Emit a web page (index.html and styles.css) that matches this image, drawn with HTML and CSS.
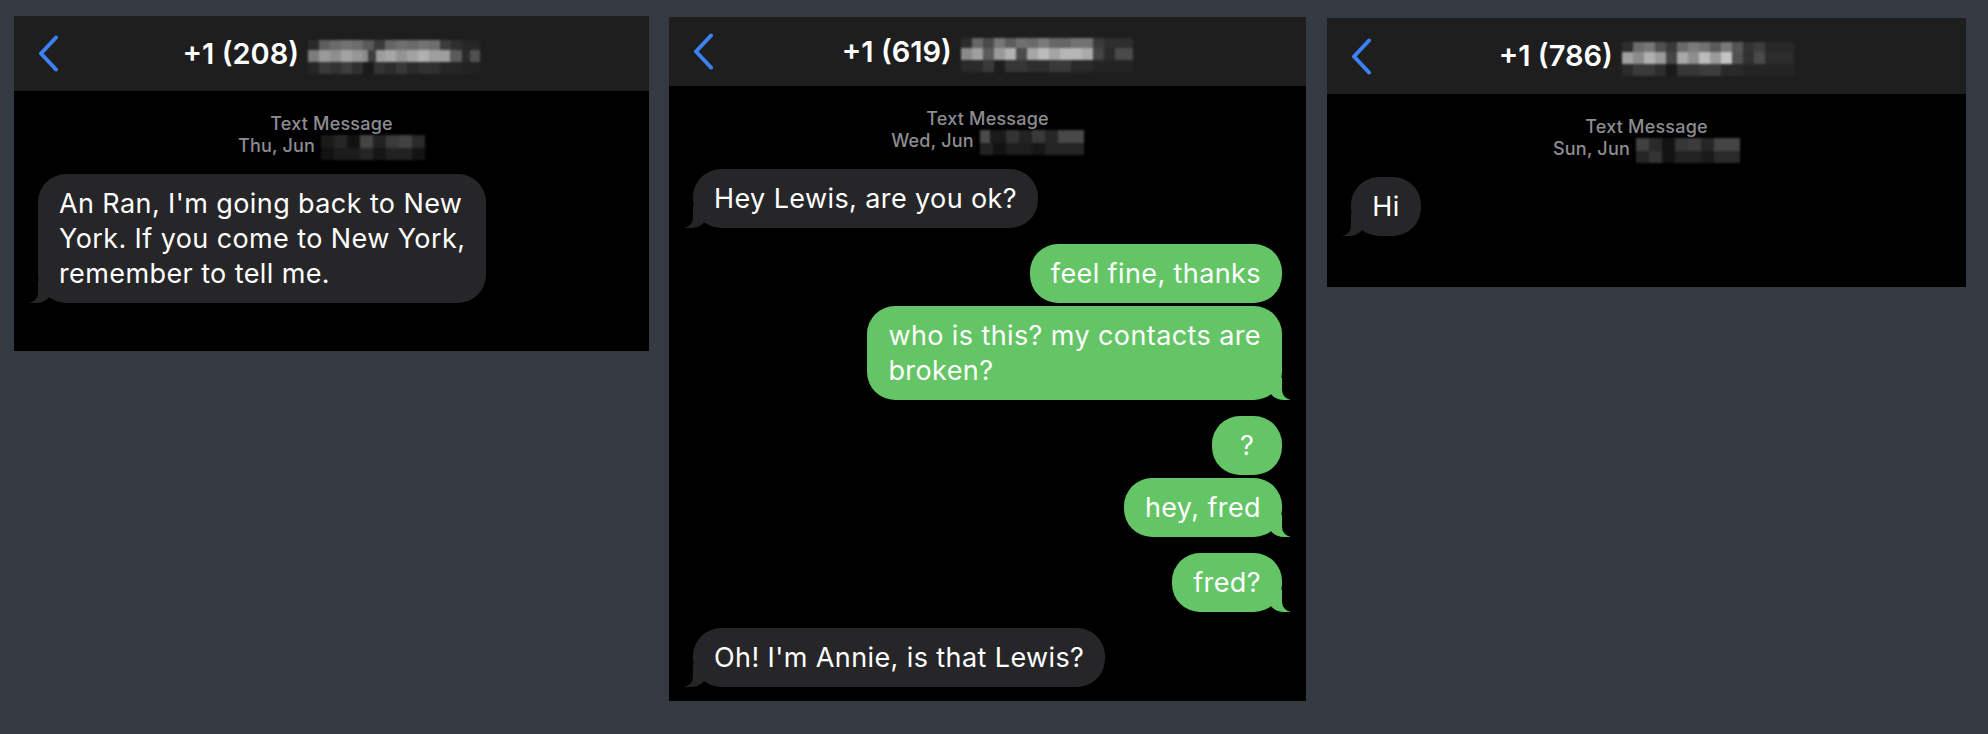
FILE: index.html
```html
<!DOCTYPE html>
<html>
<head>
  <meta charset='utf-8'>
  <title>Messages</title>
  <meta name='viewport' content='width=device-width, initial-scale=1'>
  <link rel="stylesheet" href="styles.css">
</head>

<body>
  <div class="chat chat-a">
    <div class="top">
      <svg class="back" width="22" height="37" viewBox="0 0 22 37"><path d="M19 2.5 4 18.5 19 34.5"/></svg>
      <div class="title">+1 (208) <span class="blur num-a"></span></div>
      <span></span>
    </div>
    <div class="thread">
      <div class="meta">Text Message<br>Thu, Jun <span class="blur date-a"></span></div>
      <div class="msg in tail">An Ran, I'm going back to New<br>York. If you come to New York,<br>remember to tell me.</div>
    </div>
  </div>

  <div class="chat chat-b">
    <div class="top">
      <svg class="back" width="22" height="37" viewBox="0 0 22 37"><path d="M19 2.5 4 18.5 19 34.5"/></svg>
      <div class="title">+1 (619) <span class="blur num-b"></span></div>
      <span></span>
    </div>
    <div class="thread">
      <div class="meta">Text Message<br>Wed, Jun <span class="blur date-b"></span></div>
      <div class="msg in tail">Hey Lewis, are you ok?</div>
      <div class="msg out">feel fine, thanks</div>
      <div class="msg out tail">who is this? my contacts are<br>broken?</div>
      <div class="msg out short">?</div>
      <div class="msg out tail">hey, fred</div>
      <div class="msg out tail">fred?</div>
      <div class="msg in tail">Oh! I'm Annie, is that Lewis?</div>
    </div>
  </div>

  <div class="chat chat-c">
    <div class="top">
      <svg class="back" width="22" height="37" viewBox="0 0 22 37"><path d="M19 2.5 4 18.5 19 34.5"/></svg>
      <div class="title">+1 (786) <span class="blur num-c"></span></div>
      <span></span>
    </div>
    <div class="thread">
      <div class="meta">Text Message<br>Sun, Jun <span class="blur date-c"></span></div>
      <div class="msg in tail short">Hi</div>
    </div>
  </div>
</body>
</html>
```

FILE: styles.css
```css
html, body {
  margin: 0;
}

body {
  background-color: #353a42;
  font-family: Inter, "Noto Sans", sans-serif;
  display: flex;
  align-items: flex-start;
  gap: 20px;
  padding: 16px 14px;
}

.chat {
  background-color: #000;
  width: 635px;
}

.chat-b {
  width: 637px;
  margin-top: 1px;
}

.chat-c {
  width: 639px;
  margin-top: 2px;
  margin-left: 1px;
}

/* header bar */
.top {
  display: grid;
  grid-template-columns: 1fr auto 1fr;
  align-items: center;
  height: 75px;
  background-color: #1e1e1f;
}

.chat-b .top {
  height: 69px;
}

.chat-c .top {
  height: 76px;
}

.back {
  margin-left: 23px;
  fill: none;
  stroke: #3b82f6;
  stroke-width: 4;
  stroke-linecap: round;
  stroke-linejoin: round;
}

.title {
  color: #fff;
  font-size: 29px;
  font-weight: 600;
  line-height: 36px;
  white-space: nowrap;
}

/* pixelated bits */
.blur {
  display: inline-block;
  filter: blur(0.8px);
}

.title .blur {
  width: 172px;
  height: 34px;
  margin-bottom: -10px;
  margin-left: 2px;
}

.meta .blur {
  width: 104px;
  height: 25px;
  margin-bottom: -8px;
  margin-left: 1px;
}

.num-a {
  background:
    linear-gradient(90deg, #2a2a2a 0 11px, #5e5e5e 11px 22px, #6a6a6a 22px 33px, #727272 33px 44px, #6d6d6d 44px 55px, #5a5a5a 55px 66px, #3a3a3a 66px 77px, #656565 77px 88px, #707070 88px 99px, #6a6a6a 99px 110px, #747474 110px 121px, #6e6e6e 121px 132px, #3c3c3c 132px 143px, #2e2e2e 143px 154px, #262626 154px) 0 0 / 100% 10px no-repeat,
    linear-gradient(90deg, #7c7c7c 0 11px, #9a9a9a 11px 22px, #8e8e8e 22px 33px, #a4a4a4 33px 44px, #969696 44px 55px, #8a8a8a 55px 60px, #3e3e3e 60px 68px, #9c9c9c 68px 77px, #a6a6a6 77px 88px, #939393 88px 99px, #a2a2a2 99px 110px, #b0b0b0 110px 121px, #9e9e9e 121px 142px, #5a5a5a 142px 154px, #2a2a2a 154px 162px, #505050 162px) 0 10px / 100% 12px no-repeat,
    linear-gradient(90deg, #262626 0 11px, #3a3a3a 11px 22px, #333 22px 33px, #3e3e3e 33px 44px, #303030 44px 55px, #1a1a1a 55px 66px, #343434 66px 77px, #2c2c2c 77px 88px, #383838 88px 99px, #2a2a2a 99px 110px, #303030 110px 132px, #262626 132px 154px, #222 154px) 0 22px / 100% 12px no-repeat;
}

.num-b {
  background:
    linear-gradient(90deg, #2c2c2c 0 11px, #666 11px 22px, #4a4a4a 22px 33px, #777 33px 44px, #5c5c5c 44px 55px, #707070 55px 66px, #6a6a6a 66px 77px, #7a7a7a 77px 88px, #666 88px 110px, #727272 110px 132px, #3a3a3a 132px 143px, #2e2e2e 143px) 0 0 / 100% 10px no-repeat,
    linear-gradient(90deg, #8a8a8a 0 11px, #a0a0a0 11px 22px, #5a5a5a 22px 33px, #9a9a9a 33px 44px, #b2b2b2 44px 55px, #4c4c4c 55px 66px, #a6a6a6 66px 77px, #bcbcbc 77px 88px, #a4a4a4 88px 99px, #b6b6b6 99px 121px, #aaa 121px 132px, #444 132px 143px, #2a2a2a 143px 154px, #4a4a4a 154px) 0 10px / 100% 12px no-repeat,
    linear-gradient(90deg, #2a2a2a 0 22px, #3a3a3a 22px 33px, #1e1e1e 33px 44px, #363636 44px 66px, #2e2e2e 66px 88px, #3a3a3a 88px 110px, #2a2a2a 110px 132px, #242424 132px) 0 22px / 100% 12px no-repeat;
}

.num-c {
  background:
    linear-gradient(90deg, #2e2e2e 0 11px, #6c6c6c 11px 22px, #777 22px 33px, #505050 33px 44px, #3a3a3a 44px 55px, #6a6a6a 55px 66px, #7c7c7c 66px 77px, #727272 77px 88px, #5a5a5a 88px 99px, #7a7a7a 99px 110px, #555 110px 121px, #333 121px 132px, #3e3e3e 132px 143px, #282828 143px) 0 0 / 100% 10px no-repeat,
    linear-gradient(90deg, #a0a0a0 0 11px, #8a8a8a 11px 22px, #b0b0b0 22px 33px, #999 33px 44px, #454545 44px 55px, #a8a8a8 55px 66px, #8e8e8e 66px 77px, #bcbcbc 77px 88px, #9a9a9a 88px 99px, #c4c4c4 99px 110px, #505050 110px 121px, #303030 121px 132px, #4a4a4a 132px 143px, #2c2c2c 143px) 0 10px / 100% 12px no-repeat,
    linear-gradient(90deg, #2c2c2c 0 11px, #3a3a3a 11px 33px, #2e2e2e 33px 44px, #1a1a1a 44px 55px, #363636 55px 77px, #3c3c3c 77px 99px, #2a2a2a 99px 121px, #242424 121px) 0 22px / 100% 12px no-repeat;
}

.date-a {
  background:
    linear-gradient(90deg, #1a1a1a 0 13px, #262626 13px 26px, #121212 26px 39px, #454545 39px 52px, #222 52px 65px, #3a3a3a 65px 78px, #424242 78px 91px, #2a2a2a 91px) 0 0 / 100% 13px no-repeat,
    linear-gradient(90deg, #121212 0 13px, #1c1c1c 13px 39px, #262626 39px 52px, #161616 52px 65px, #222 65px 91px, #141414 91px) 0 13px / 100% 12px no-repeat;
}

.date-b {
  background:
    linear-gradient(90deg, #4a4a4a 0 10px, #1a1a1a 10px 26px, #333 26px 39px, #222 39px 52px, #3a3a3a 52px 65px, #262626 65px 78px, #484848 78px 104px) 0 0 / 100% 13px no-repeat,
    linear-gradient(90deg, #222 0 13px, #121212 13px 26px, #1e1e1e 26px 52px, #161616 52px 65px, #242424 65px 104px) 0 13px / 100% 12px no-repeat;
}

.date-c {
  background:
    linear-gradient(90deg, #404040 0 13px, #2a2a2a 13px 26px, #121212 26px 39px, #363636 39px 52px, #3c3c3c 52px 65px, #262626 65px 78px, #444 78px 104px) 0 0 / 100% 13px no-repeat,
    linear-gradient(90deg, #262626 0 13px, #343434 13px 26px, #121212 26px 39px, #222 39px 65px, #1a1a1a 65px 78px, #2a2a2a 78px 104px) 0 13px / 100% 12px no-repeat;
}

/* conversation */
.thread {
  display: flex;
  flex-direction: column;
  padding: 22px 24px 48px;
}

.chat-b .thread {
  padding-bottom: 14px;
}

.chat-c .thread {
  padding-bottom: 51px;
}

.meta {
  color: #8d8d92;
  font-size: 18px;
  font-weight: 500;
  letter-spacing: 0.2px;
  line-height: 22px;
  text-align: center;
  margin-bottom: 17px;
}

.msg {
  position: relative;
  padding: 12px 21px;
  border-radius: 28px;
  color: #fff;
  font-size: 27px;
  letter-spacing: 0.4px;
  line-height: 35px;
  white-space: nowrap;
}

.msg.short {
  min-width: 28px;
  text-align: center;
}

.msg + .msg {
  margin-top: 3px;
}

.tail + .msg {
  margin-top: 16px;
}

.in {
  align-self: flex-start;
  background-color: #262628;
}

.out {
  align-self: flex-end;
  background-color: #64c566;
}

/* bubble tails */
.tail::before,
.tail::after {
  content: "";
  position: absolute;
  bottom: 0;
  height: 22px;
}

.in.tail::before {
  left: -8px;
  width: 22px;
  background-color: #262628;
  border-bottom-right-radius: 16px 14px;
}

.in.tail::after {
  left: -10px;
  width: 10px;
  background-color: #000;
  border-bottom-right-radius: 10px;
}

.out.tail::before {
  right: -8px;
  width: 22px;
  background-color: #64c566;
  border-bottom-left-radius: 16px 14px;
}

.out.tail::after {
  right: -10px;
  width: 10px;
  background-color: #000;
  border-bottom-left-radius: 10px;
}
```
